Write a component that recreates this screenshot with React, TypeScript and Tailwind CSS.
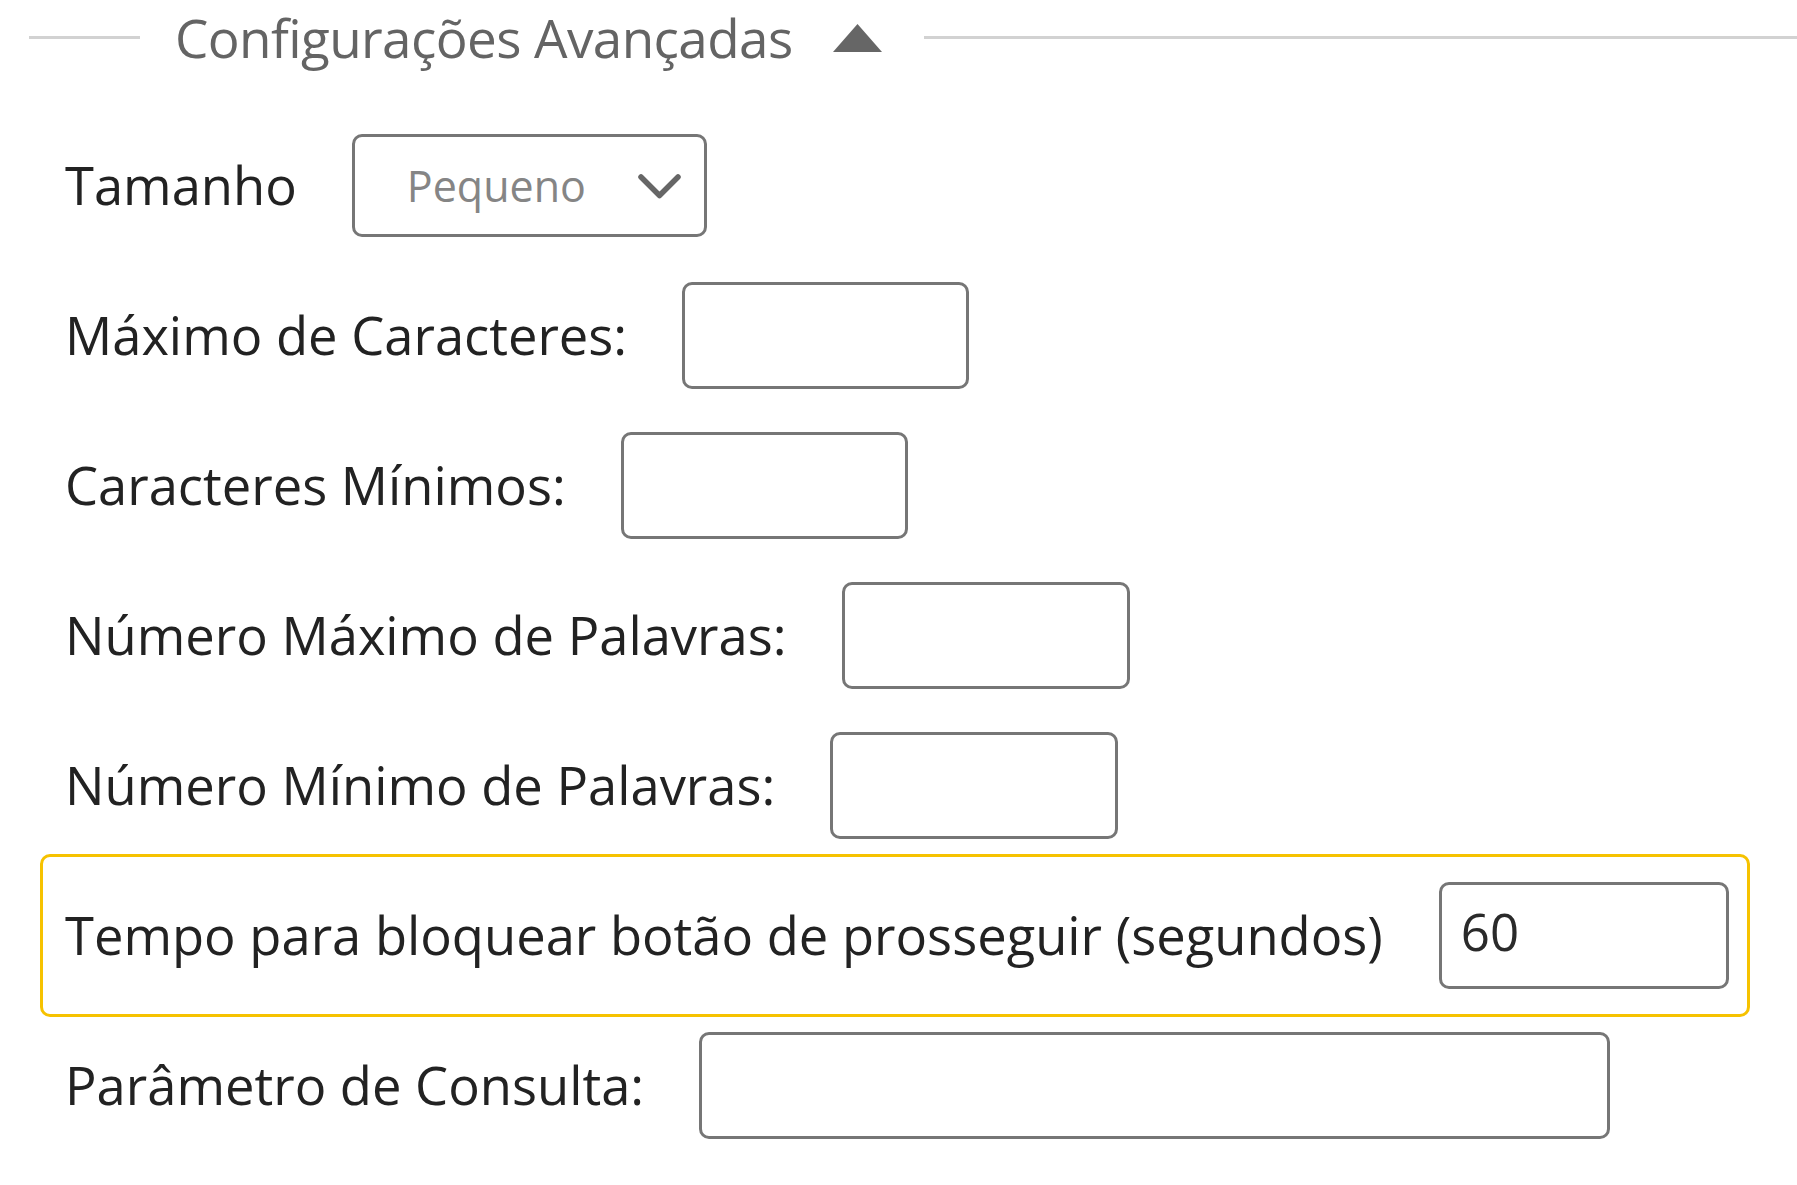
import React from "react";

const font = { fontFamily: '"Open Sans", "Liberation Sans", sans-serif' };

function TextInput({ width, value }: { width: string; value?: string }) {
  return (
    <div
      className={`${width} h-[107px] shrink-0 rounded-[10px] border-[3px] border-[#767676] bg-white flex items-center pl-[19px] pb-[8px] text-[51px] leading-none text-[#2a2a2a]`}
    >
      {value}
    </div>
  );
}

function Row({ label, children }: { label: string; children: React.ReactNode }) {
  return (
    <div className="flex h-[150px] items-center gap-[55px] border-[3px] border-transparent px-[22px]">
      <span className="whitespace-nowrap text-[52.5px] leading-none text-[#222]">{label}</span>
      {children}
    </div>
  );
}

export default function App() {
  return (
    <div className="min-h-[1185px] w-[1797px] overflow-hidden bg-white" style={font}>
      {/* header */}
      <div className="flex h-[74px] items-center">
        <div className="ml-[29px] h-[3px] w-[111px] bg-[#d2d2d2]" />
        <span className="ml-[35px] whitespace-nowrap text-[53px] leading-none tracking-[-0.6px] text-[#646464]">
          Configurações Avançadas
        </span>
        <svg className="ml-[40px] shrink-0" width="49" height="29" viewBox="0 0 49 29">
          <polygon points="0,29 24.5,1 49,29" fill="#666" />
        </svg>
        <div className="ml-[42px] h-[3px] flex-1 bg-[#d2d2d2]" />
      </div>

      <div className="mt-[36px] pl-[40px]">
        <Row label="Tamanho">
          <div className="relative flex h-[103px] w-[355px] shrink-0 items-center rounded-[10px] border-[3px] border-[#767676] bg-white pl-[52px]">
            <span className="text-[43px] leading-none text-[#858585]">Pequeno</span>
            <svg
              className="absolute right-[22px] top-[35px]"
              width="45"
              height="29"
              viewBox="0 0 45 29"
            >
              <path d="M4 5 L22.5 23.5 L41 5" fill="none" stroke="#666" strokeWidth="5.5" strokeLinecap="round" strokeLinejoin="round" />
            </svg>
          </div>
        </Row>
        <Row label="Máximo de Caracteres:">
          <TextInput width="w-[287px]" />
        </Row>
        <Row label="Caracteres Mínimos:">
          <TextInput width="w-[287px]" />
        </Row>
        <Row label="Número Máximo de Palavras:">
          <TextInput width="w-[288px]" />
        </Row>
        <Row label="Número Mínimo de Palavras:">
          <TextInput width="w-[288px]" />
        </Row>
        <div className="-my-[6.5px] flex h-[163px] w-[1710px] items-center gap-[56px] rounded-[10px] border-[3px] border-[#f6c200] px-[22px]">
          <span className="whitespace-nowrap text-[52.5px] leading-none text-[#222]">
            Tempo para bloquear botão de prosseguir (segundos)
          </span>
          <TextInput width="w-[290px]" value="60" />
        </div>
        <Row label="Parâmetro de Consulta:">
          <TextInput width="w-[911px]" />
        </Row>
      </div>
    </div>
  );
}
